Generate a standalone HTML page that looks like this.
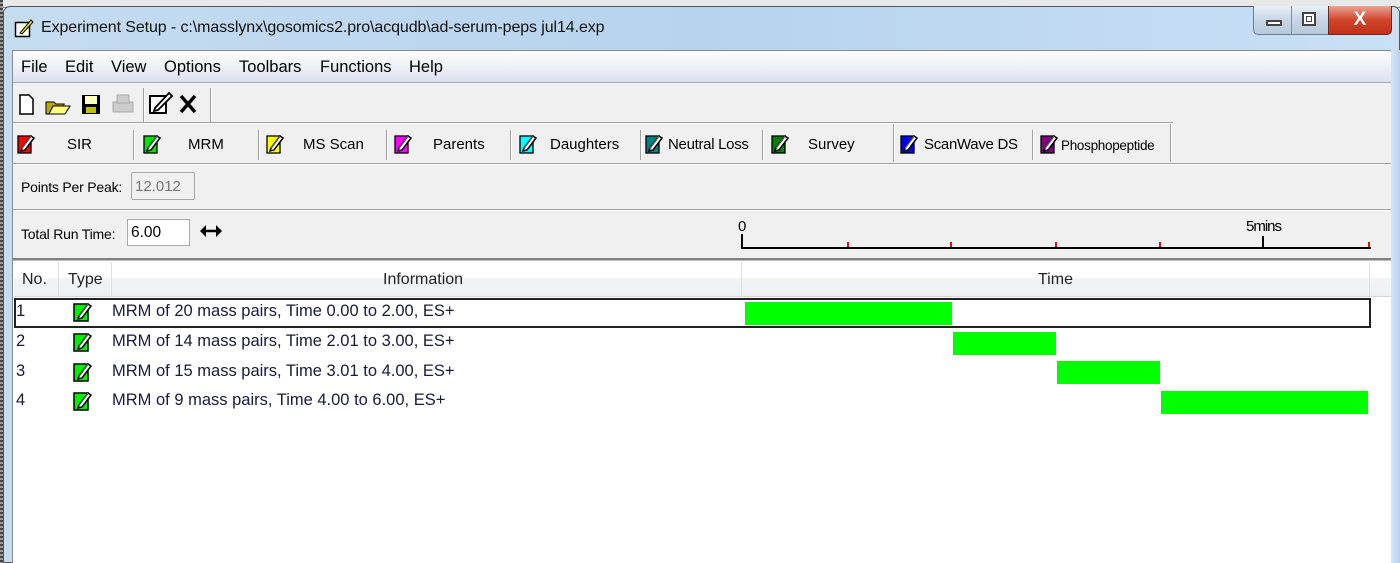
<!DOCTYPE html>
<html><head><meta charset="utf-8"><style>
*{margin:0;padding:0;box-sizing:border-box}
body{width:1400px;height:563px;overflow:hidden;position:relative;background:#fff;font-family:"Liberation Sans",Arial,sans-serif;color:#000}
.a{position:absolute}
.t{position:absolute;font-size:15px;white-space:nowrap;line-height:18px}
.sep{position:absolute;width:2px;border-left:1px solid #a0a0a0;border-right:1px solid #fff}
.row{position:absolute;font-size:16.5px;color:#1a1a3a;white-space:nowrap}
.g{position:absolute;background:#00ff00}
.rt{position:absolute;top:242px;width:2px;height:5px;background:#f00}
</style></head><body>
<div class="a" style="left:0;top:0;width:1400px;height:8px;background:#e8e8e8;border-bottom:1px solid #888"></div>
<div class="a" style="left:3px;top:6px;width:1397px;height:557px;background:linear-gradient(90deg,#c5dcf0,#b7d3ee 50%,#c9e0f5);border:1px solid #555;border-radius:7px 7px 0 0"></div>
<div class="a" style="left:0;top:0;width:3px;height:563px;background:repeating-linear-gradient(#444 0 2px,#999 2px 4px)"></div>
<svg class="a" style="left:14px;top:18px" width="20" height="20"><rect x="1.5" y="4.5" width="14" height="14" fill="#fff" stroke="#000" stroke-width="1.5"/><path d="M6 15 L17 2 L19 4 L8 16 Z" fill="#ee0" stroke="#000"/></svg>
<div class="t" style="left:41px;top:19px;font-size:16px;color:#111;letter-spacing:-0.1px">Experiment Setup - c:\masslynx\gosomics2.pro\acqudb\ad-serum-peps jul14.exp</div>
<div class="a" style="left:1253px;top:6px;width:88px;height:29px;border:1px solid #6b7d95;border-top:none;border-radius:0 0 0 5px;background:linear-gradient(#e9f0f8,#c8d6e6 50%,#b7c9dd)"></div>
<div class="a" style="left:1291px;top:6px;width:1px;height:28px;background:#7d8ea5"></div>
<div class="a" style="left:1266px;top:20px;width:16px;height:6px;border:2px solid #444;background:#fff;border-radius:1px"></div>
<div class="a" style="left:1302px;top:12px;width:14px;height:14px;border:2px solid #444;background:#fff"><div style="margin:2px;height:6px;border:1px solid #444"></div></div>
<div class="a" style="left:1328px;top:6px;width:64px;height:29px;border:1px solid #6b2a20;border-top:none;border-radius:0 0 5px 0;background:linear-gradient(#e9a493,#d0462c 50%,#c03018);color:#fff;font-weight:bold;font-size:19px;text-align:center;line-height:27px">X</div>
<div class="a" style="left:12px;top:50px;width:1380px;height:513px;background:#f0f0f0;border:1px solid #8a8a8a"></div>
<div class="a" style="left:13px;top:51px;width:1378px;height:32px;background:linear-gradient(#fdfdfe,#f2f3f8 40%,#dcdfef);border-bottom:1px solid #a8a8b0"></div>
<div class="t" style="left:21px;top:58px;font-size:16.5px">File</div>
<div class="t" style="left:65px;top:58px;font-size:16.5px">Edit</div>
<div class="t" style="left:111px;top:58px;font-size:16.5px">View</div>
<div class="t" style="left:164px;top:58px;font-size:16.5px">Options</div>
<div class="t" style="left:239px;top:58px;font-size:16.5px">Toolbars</div>
<div class="t" style="left:320px;top:58px;font-size:16.5px">Functions</div>
<div class="t" style="left:409px;top:58px;font-size:16.5px">Help</div>
<svg class="a" style="left:16px;top:92px" width="200" height="26">
<path d="M4 3 H13 L17 7 V22 H4 Z" fill="#fff" stroke="#000" stroke-width="1.5"/>
<path d="M30 10 H38 L40 12 H48 V22 H30 Z" fill="#b8a800" stroke="#000"/><path d="M33 22 L37 14 H54 L49 22 Z" fill="#ffff80" stroke="#000"/>
<rect x="66" y="3" width="18" height="19" fill="#000"/><rect x="69" y="4" width="12" height="8" fill="#ffffc0"/><rect x="70" y="15" width="10" height="6" fill="#c0c000"/>
<g fill="#ccc" stroke="#aaa"><rect x="97" y="10" width="20" height="10"/><rect x="101" y="3" width="12" height="8"/></g>
</svg>
<div class="sep" style="left:143px;top:88px;height:34px"></div>
<svg class="a" style="left:148px;top:91px" width="60" height="26"><rect x="2" y="5" width="16" height="17" fill="#fff" stroke="#000" stroke-width="2"/><path d="M7 17 L21 2 L24 5 L10 19 L6 20 Z" fill="#fff" stroke="#000" stroke-width="1.8"/><path d="M33 5 L47 21 M47 5 L33 21" stroke="#000" stroke-width="3.5"/></svg>
<div class="sep" style="left:210px;top:88px;height:34px"></div>
<div class="a" style="left:13px;top:122px;width:1160px;height:1px;background:#a0a0a0"></div>
<div class="a" style="left:13px;top:123px;width:1160px;height:1px;background:#fff"></div>
<svg width="0" height="0" style="position:absolute"><defs><g id="pen"><path d="M5 15 L14 3 L17 5 L8 17 L4 18 Z" fill="#fff" stroke="#000" stroke-width="1.5"/><path d="M5 15 L14 3" stroke="#666"/></g></defs></svg>
<svg class="a" style="left:17px;top:133px" width="20" height="22"><rect x="1" y="3" width="13" height="17" fill="#f00" stroke="#000" stroke-width="1.3"/><use href="#pen"/></svg>
<div class="t" style="left:67px;top:136px">SIR</div>
<div class="sep" style="left:133px;top:130px;height:30px"></div>
<svg class="a" style="left:143px;top:133px" width="20" height="22"><rect x="1" y="3" width="13" height="17" fill="#00e000" stroke="#000" stroke-width="1.3"/><use href="#pen"/></svg>
<div class="t" style="left:188px;top:136px">MRM</div>
<div class="sep" style="left:258px;top:130px;height:30px"></div>
<svg class="a" style="left:266px;top:133px" width="20" height="22"><rect x="1" y="3" width="13" height="17" fill="#ff0" stroke="#000" stroke-width="1.3"/><use href="#pen"/></svg>
<div class="t" style="left:303px;top:136px">MS Scan</div>
<div class="sep" style="left:386px;top:130px;height:30px"></div>
<svg class="a" style="left:394px;top:133px" width="20" height="22"><rect x="1" y="3" width="13" height="17" fill="#f0f" stroke="#000" stroke-width="1.3"/><use href="#pen"/></svg>
<div class="t" style="left:433px;top:136px">Parents</div>
<div class="sep" style="left:510px;top:130px;height:30px"></div>
<svg class="a" style="left:519px;top:133px" width="20" height="22"><rect x="1" y="3" width="13" height="17" fill="#0ff" stroke="#000" stroke-width="1.3"/><use href="#pen"/></svg>
<div class="t" style="left:550px;top:136px">Daughters</div>
<div class="sep" style="left:640px;top:130px;height:30px"></div>
<svg class="a" style="left:645px;top:133px" width="20" height="22"><rect x="1" y="3" width="13" height="17" fill="#008080" stroke="#000" stroke-width="1.3"/><use href="#pen"/></svg>
<div class="t" style="left:668px;top:136px;letter-spacing:-0.3px">Neutral Loss</div>
<div class="sep" style="left:762px;top:130px;height:30px"></div>
<svg class="a" style="left:771px;top:133px" width="20" height="22"><rect x="1" y="3" width="13" height="17" fill="#008000" stroke="#000" stroke-width="1.3"/><use href="#pen"/></svg>
<div class="t" style="left:808px;top:136px">Survey</div>
<div class="sep" style="left:893px;top:124px;height:38px"></div>
<svg class="a" style="left:900px;top:133px" width="20" height="22"><rect x="1" y="3" width="13" height="17" fill="#0000f0" stroke="#000" stroke-width="1.3"/><use href="#pen"/></svg>
<div class="t" style="left:924px;top:136px;letter-spacing:-0.3px">ScanWave DS</div>
<div class="sep" style="left:1032px;top:130px;height:30px"></div>
<svg class="a" style="left:1040px;top:133px" width="20" height="22"><rect x="1" y="3" width="13" height="17" fill="#800080" stroke="#000" stroke-width="1.3"/><use href="#pen"/></svg>
<div class="t" style="left:1061px;top:137px;font-size:13.5px;letter-spacing:-0.3px">Phosphopeptide</div>
<div class="sep" style="left:1170px;top:124px;height:38px"></div>
<div class="a" style="left:13px;top:163px;width:1378px;height:1px;background:#a0a0a0"></div>
<div class="a" style="left:13px;top:164px;width:1378px;height:1px;background:#fff"></div>
<div class="t" style="left:21px;top:178px;font-size:14px;letter-spacing:-0.2px">Points Per Peak:</div>
<div class="a" style="left:131px;top:172px;width:64px;height:28px;border:1px solid #a8a8a8;border-radius:2px;background:#f0f0f0;color:#777;font-size:15px;padding:5px 3px">12.012</div>
<div class="a" style="left:13px;top:209px;width:1378px;height:1px;background:#a0a0a0"></div>
<div class="a" style="left:13px;top:210px;width:1378px;height:1px;background:#fff"></div>
<div class="t" style="left:21px;top:225px;font-size:14px;letter-spacing:-0.2px">Total Run Time:</div>
<div class="a" style="left:127px;top:219px;width:63px;height:27px;border:1px solid #aaa;background:#fff;font-size:15.5px;padding:4px 3px">6.00</div>
<svg class="a" style="left:199px;top:224px" width="24" height="14"><path d="M2 7 H22" stroke="#000" stroke-width="2.5"/><path d="M1 7 L7 1 V13 Z M23 7 L17 1 V13 Z" fill="#000"/></svg>
<div class="t" style="left:738px;top:218px;font-size:15px">0</div>
<div class="t" style="left:1246px;top:218px;font-size:15px;letter-spacing:-1px">5mins</div>
<div class="a" style="left:741px;top:247px;width:630px;height:2px;background:#000"></div>
<div class="a" style="left:741px;top:234px;width:2px;height:14px;background:#000"></div>
<div class="a" style="left:1262px;top:236px;width:2px;height:12px;background:#000"></div>
<div class="rt" style="left:847px"></div>
<div class="rt" style="left:950px"></div>
<div class="rt" style="left:1055px"></div>
<div class="rt" style="left:1159px"></div>
<div class="rt" style="left:1368px"></div>
<div class="a" style="left:13px;top:258px;width:1378px;height:3px;background:#808080;border-bottom:1px solid #c0c0c0"></div>
<div class="a" style="left:13px;top:261px;width:1378px;height:302px;background:#fff"></div>
<div class="a" style="left:14px;top:262px;width:1377px;height:35px;background:linear-gradient(#fff 0,#fff 45%,#f1f2f4 50%,#eef0f2);border-bottom:1px solid #d5d5d5"></div>
<div class="a" style="left:58px;top:262px;width:1px;height:34px;background:#e0e0e0"></div>
<div class="a" style="left:111px;top:262px;width:1px;height:34px;background:#e0e0e0"></div>
<div class="a" style="left:741px;top:262px;width:1px;height:34px;background:#e0e0e0"></div>
<div class="a" style="left:1369px;top:262px;width:1px;height:34px;background:#e0e0e0"></div>
<div class="t" style="left:22px;top:271px;color:#222;font-size:16px">No.</div>
<div class="t" style="left:68px;top:271px;color:#222;font-size:16px">Type</div>
<div class="t" style="left:383px;top:271px;color:#222;font-size:16px">Information</div>
<div class="t" style="left:1038px;top:271px;color:#222;font-size:16px">Time</div>
<div class="a" style="left:14px;top:298px;width:1357px;height:30px;border:2px solid #222"></div>
<svg width="0" height="0" style="position:absolute"><defs><g id="gp"><rect x="1" y="3" width="14" height="17" fill="#00ee00" stroke="#000" stroke-width="1.5"/><use href="#pen" transform="translate(1,0)"/></g></defs></svg>
<div class="row" style="left:16px;top:302px">1</div>
<div class="row" style="left:16px;top:332px">2</div>
<div class="row" style="left:16px;top:362px">3</div>
<div class="row" style="left:16px;top:391px">4</div>
<svg class="a" style="left:73px;top:301px" width="22" height="22"><use href="#gp"/></svg>
<svg class="a" style="left:73px;top:331px" width="22" height="22"><use href="#gp"/></svg>
<svg class="a" style="left:73px;top:361px" width="22" height="22"><use href="#gp"/></svg>
<svg class="a" style="left:73px;top:390px" width="22" height="22"><use href="#gp"/></svg>
<div class="row" style="left:112px;top:302px">MRM of 20 mass pairs, Time 0.00 to 2.00, ES+</div>
<div class="row" style="left:112px;top:332px">MRM of 14 mass pairs, Time 2.01 to 3.00, ES+</div>
<div class="row" style="left:112px;top:362px">MRM of 15 mass pairs, Time 3.01 to 4.00, ES+</div>
<div class="row" style="left:112px;top:391px">MRM of 9 mass pairs, Time 4.00 to 6.00, ES+</div>
<div class="g" style="left:745px;top:302px;width:207px;height:23px"></div>
<div class="g" style="left:953px;top:332px;width:103px;height:23px"></div>
<div class="g" style="left:1057px;top:361px;width:103px;height:23px"></div>
<div class="g" style="left:1161px;top:391px;width:207px;height:23px"></div>
<div class="a" style="left:1391px;top:50px;width:9px;height:513px;background:linear-gradient(90deg,#d6e6f5,#b4d0ec)"></div>
</body></html>
